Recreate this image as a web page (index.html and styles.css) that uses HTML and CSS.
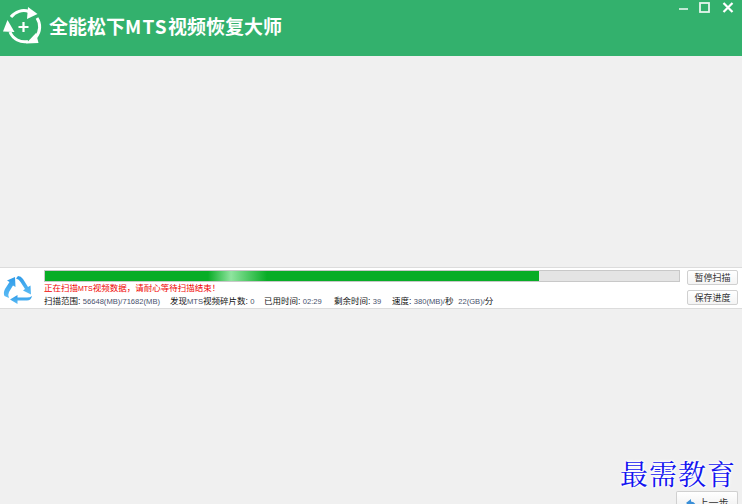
FILE: index.html
```html
<!DOCTYPE html>
<html lang="zh">
<head>
<meta charset="utf-8">
<title>全能松下MTS视频恢复大师</title>
<link rel="stylesheet" href="styles.css">
</head>
<body>
<div class="app">
  <header class="titlebar">
    <svg class="logo" viewBox="0 0 46 50" width="46" height="50">
      <g fill="none" stroke="#fff" stroke-width="3">
        <path d="M11 17 A16 16 0 0 1 29 11.5"/>
        <path d="M37 18 A16 16 0 0 1 36 37"/>
        <path d="M28 41.5 A16 16 0 0 1 10 32"/>
      </g>
      <g fill="#fff">
        <path d="M28 7 L37.5 14 L27 19 Z"/>
        <path d="M36 33 L38.5 43 L26 43.5 Z"/>
        <path d="M7.5 20 L14.5 32 L3 31.5 Z"/>
      </g>
      <path d="M23.5 22 V32 M18.5 27 H28.5" stroke="#fff" stroke-width="2.2" fill="none"/>
    </svg>
    <h1 class="title">全能松下<span class="latin">MTS</span>视频恢复大师</h1>
    <div class="winbtns">
      <svg viewBox="0 0 12 12" width="12" height="12"><path d="M1 8 H10" stroke="#e6f5ed" stroke-width="1.6"/></svg>
      <svg viewBox="0 0 12 12" width="12" height="12"><rect x="2" y="2" width="9" height="9" fill="none" stroke="#e6f5ed" stroke-width="1.8"/></svg>
      <svg class="win-close" viewBox="0 0 12 12" width="12" height="12"><path d="M1.5 2 L10.5 11 M10.5 2 L1.5 11" stroke="#fff" stroke-width="2.2"/></svg>
    </div>
  </header>
  <main class="content">
    <section class="scan">
      <svg class="scan-icon" viewBox="0 0 34 36" width="34" height="36">
        <defs>
          <linearGradient id="sky" x1="0" y1="0" x2="0" y2="1">
            <stop offset="0" stop-color="#2f9be8"/>
            <stop offset="1" stop-color="#5cbcf5"/>
          </linearGradient>
        </defs>
        <g fill="url(#sky)">
          <path d="M4.5 27 Q3 24 5 20 L9.5 13 L7 11.5 L15 8 L15.5 18 L13 16.5 L9 23 Q7.5 26 9 29 Z"/>
          <path d="M18 7 Q21 7 23 10 L28 18 L30.5 16.5 L31 25.5 L23 21.5 L25 20 L20.5 13 Q19 10 16 9.5 Z"/>
          <path d="M32 27 Q31 31.5 27 31.5 L17.5 31.5 L17.5 35 L10 30.5 L17.5 26 L17.5 28.5 L27 28.5 Q30 28.5 32 27 Z"/>
        </g>
      </svg>
      <div class="scan-main">
        <div class="bar"><div class="bar-fill"></div></div>
        <div class="status">正在扫描<span class="tiny">MTS</span>视频数据，请耐心等待扫描结束！</div>
        <div class="stats">
          <span class="stat range">扫描范围: <b>56648(MB)/71682(MB)</b></span>
          <span class="stat found">发现<b>MTS</b>视频碎片数: <b>0</b></span>
          <span class="stat used">已用时间: <b>02:29</b></span>
          <span class="stat left">剩余时间: <b>39</b></span>
          <span class="stat speed">速度: <b>380(MB)/</b>秒&nbsp; <b>22(GB)/</b>分</span>
        </div>
      </div>
      <div class="scan-actions">
        <button class="btn">暂停扫描</button>
        <button class="btn">保存进度</button>
      </div>
    </section>
    <footer class="foot">
      <div class="mark">最需教育</div>
      <button class="btn back"><svg viewBox="0 0 10 10" width="10" height="10"><path d="M0 5 L5 1 V3.5 Q9 3.5 10 8 Q8 6 5 6.5 V9 Z" fill="#3a8fd8"/></svg>上一步</button>
    </footer>
  </main>
</div>
</body>
</html>
```
FILE: styles.css
```css
* { box-sizing: border-box; }
html, body { margin: 0; height: 100%; overflow: hidden; }
body {
  background: #f0f0f0;
  font-family: "Liberation Sans", "Noto Sans CJK SC", sans-serif;
}
.app { height: 504px; display: flex; flex-direction: column; }
.titlebar {
  flex: none;
  height: 56px;
  background: #33b16d;
  display: flex;
  align-items: flex-start;
  color: #fff;
}
.logo { flex: none; }
.title {
  margin: 13px 0 0 3px;
  font-size: 19px;
  line-height: 26px;
  font-weight: 700;
  font-family: "Noto Sans CJK SC", sans-serif;
  white-space: nowrap;
}
.latin { letter-spacing: 1.2px; }
.winbtns {
  margin-left: auto;
  display: flex;
  gap: 8px;
  padding: 1px 8px 0 0;
}
.winbtns svg { display: block; }
.winbtns .win-close { margin-left: 4px; }
.content { flex: 1; min-height: 0; display: flex; flex-direction: column; padding-top: 211px; }
.scan {
  flex: none;
  height: 42px;
  background: #fff;
  border-top: 1px solid #dcdcdc;
  border-bottom: 1px solid #dcdcdc;
  display: flex;
  align-items: flex-start;
}
.scan-icon { flex: none; margin-top: 1px; }
.scan-main { flex: none; width: 636px; margin: 2px 0 0 10px; }
.bar {
  height: 12px;
  background: #e4e4e4;
  border: 1px solid #c8c8c8;
  overflow: hidden;
}
.bar-fill {
  width: 494px;
  height: 100%;
  background: linear-gradient(90deg, #08ad26 0, #08ad26 163px, #8fe49f 186px, #08ad26 222px, #08ad26 100%);
}
.status {
  font-size: 8.5px;
  line-height: 12px;
  color: #f00000;
  white-space: nowrap;
}
.tiny { font-size: 7px; }
.stats {
  display: flex;
  font-size: 8.5px;
  line-height: 12px;
  color: #111;
  white-space: nowrap;
}
.stat b { font-weight: 400; font-size: 7.6px; color: #47516c; }
.range { width: 126px; }
.found { width: 94px; }
.used { width: 70px; }
.left { width: 58px; }
.scan-actions {
  flex: none;
  display: flex;
  flex-direction: column;
  gap: 5px;
  margin: 2px 0 0 7px;
}
.btn {
  width: 51px;
  height: 15px;
  padding: 0;
  background: linear-gradient(#fff, #f4f4f4);
  border: 1px solid #d0d0d0;
  border-radius: 2px;
  font-family: "Noto Sans CJK SC", sans-serif;
  font-size: 9px;
  line-height: 13px;
  color: #333;
}
.foot {
  margin-top: auto;
  display: flex;
  flex-direction: column;
  align-items: flex-end;
  padding-right: 4px;
}
.mark {
  margin-right: 2px;
  margin-bottom: 2px;
  font-family: "Noto Serif CJK SC", "Noto Sans CJK SC", serif;
  font-size: 28px;
  line-height: 32px;
  letter-spacing: 1px;
  white-space: nowrap;
  color: #1414f0;
  text-shadow: 0 0 2px #fff, 0 0 2px #fff, 0 0 3px #fff, 0 0 3px #fff, 0 0 4px #fff;
}
.back {
  width: 62px;
  height: 13px;
  padding-top: 5px;
  font-size: 10px;
  line-height: 12px;
  display: flex;
  align-items: flex-start;
  justify-content: center;
  gap: 3px;
  overflow: hidden;
  border-bottom: 0;
  border-radius: 2px 2px 0 0;
}
.back svg { margin-top: 1px; flex: none; }
```
